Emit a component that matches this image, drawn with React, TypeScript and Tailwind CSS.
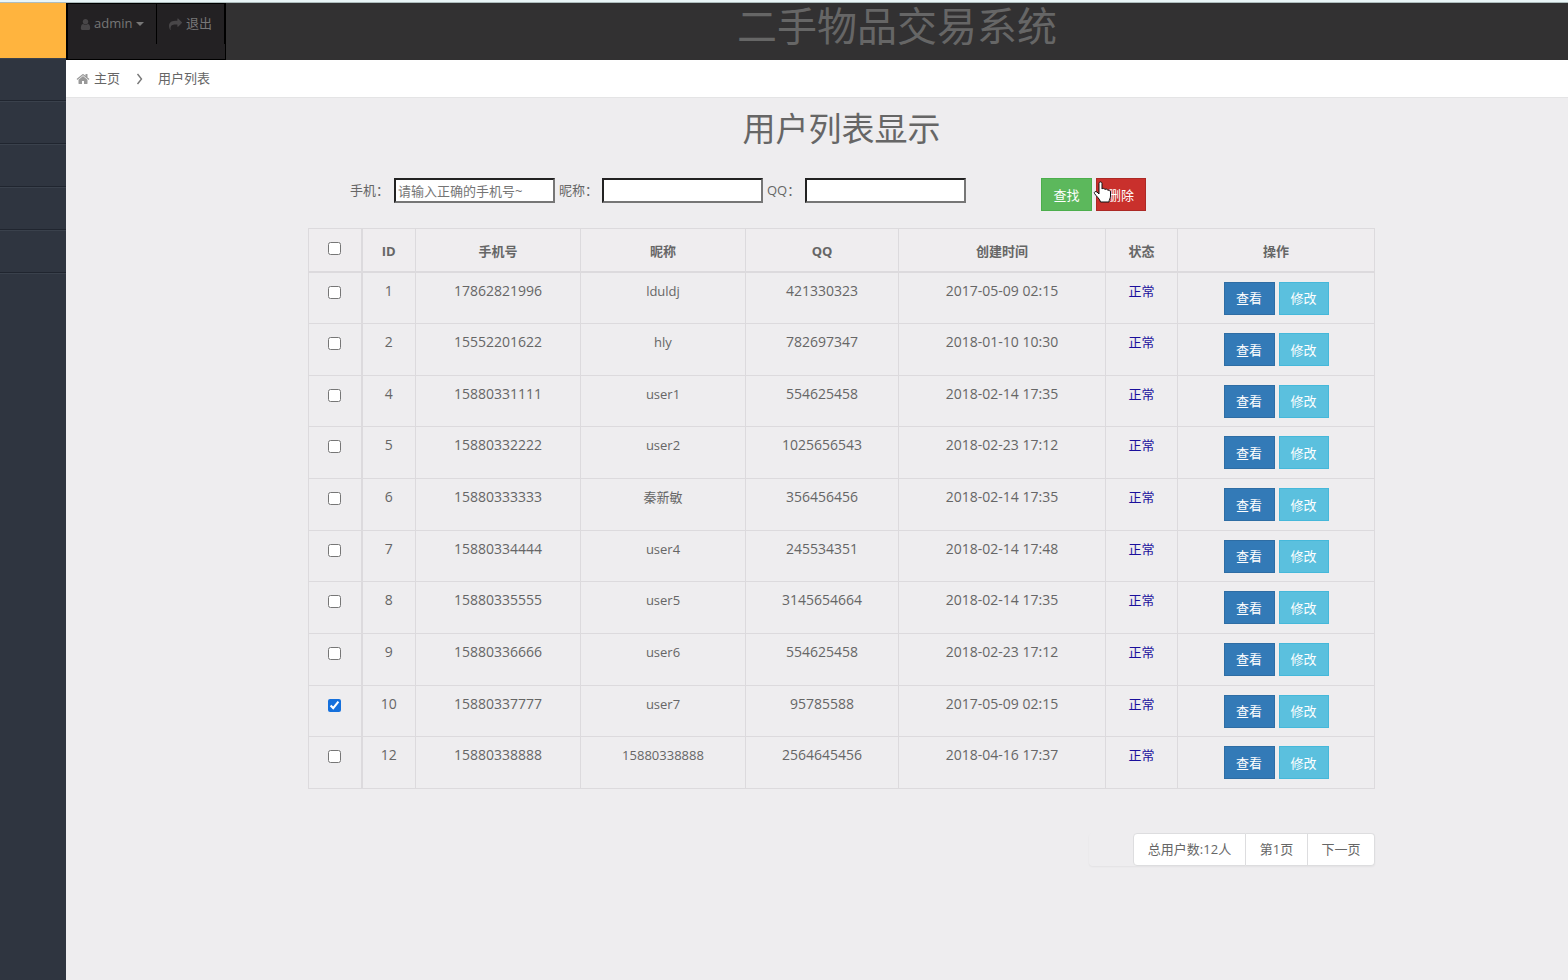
type User = {
  id: number;
  phone: string;
  nick: string;
  qq: string;
  created: string;
  checked?: boolean;
};

const users: User[] = [
  { id: 1, phone: "17862821996", nick: "lduldj", qq: "421330323", created: "2017-05-09 02:15" },
  { id: 2, phone: "15552201622", nick: "hly", qq: "782697347", created: "2018-01-10 10:30" },
  { id: 4, phone: "15880331111", nick: "user1", qq: "554625458", created: "2018-02-14 17:35" },
  { id: 5, phone: "15880332222", nick: "user2", qq: "1025656543", created: "2018-02-23 17:12" },
  { id: 6, phone: "15880333333", nick: "秦新敏", qq: "356456456", created: "2018-02-14 17:35" },
  { id: 7, phone: "15880334444", nick: "user4", qq: "245534351", created: "2018-02-14 17:48" },
  { id: 8, phone: "15880335555", nick: "user5", qq: "3145654664", created: "2018-02-14 17:35" },
  { id: 9, phone: "15880336666", nick: "user6", qq: "554625458", created: "2018-02-23 17:12" },
  { id: 10, phone: "15880337777", nick: "user7", qq: "95785588", created: "2017-05-09 02:15", checked: true },
  { id: 12, phone: "15880338888", nick: "15880338888", qq: "2564645456", created: "2018-04-16 17:37" },
];

const columns = ["ID", "手机号", "昵称", "QQ", "创建时间", "状态", "操作"];
const menu = ["用户", "物品", "订单", "公告", "设置"];

const fieldClass =
  "h-[25px] w-[161px] border-2 border-t-[#222] border-l-[#222] border-r-[#767676] border-b-[#767676] bg-white px-0.5 text-[13px] outline-none placeholder:text-[#757575]";
const buttonClass = "h-[33px] shrink-0 border text-center text-[13px] leading-5 whitespace-nowrap text-white";

const icons = {
  user: "M1536 1399q0 109-62.5 187t-150.5 78h-854q-88 0-150.5-78t-62.5-187q0-85 8.5-160.5t31.5-152 58.5-131 94-89 134.5-34.5q131 128 313 128t313-128q76 0 134.5 34.5t94 89 58.5 131 31.5 152 8.5 160.5zm-256-887q0 159-112.5 271.5t-271.5 112.5-271.5-112.5-112.5-271.5 112.5-271.5 271.5-112.5 271.5 112.5 112.5 271.5z",
  share:
    "M1792 640q0 26-19 45l-512 512q-19 19-45 19t-45-19-19-45v-256h-224q-98 0-175.5 6t-154 21.5-133 42.5-105.5 69.5-80 101-48.5 138.5-17.5 181q0 55 5 123 0 6 2.5 23.5t2.5 26.5q0 15-8.5 25t-23.5 10q-16 0-28-17-7-9-13-22t-13.5-30-10.5-24q-127-285-127-451 0-199 53-333 162-403 875-403h224v-256q0-26 19-45t45-19 45 19l512 512q19 19 19 45z",
  home: "M1472 992v480q0 26-19 45t-45 19h-384v-384h-256v384h-384q-26 0-45-19t-19-45v-480q0-1 .5-3t.5-3l575-474 575 474q1 2 1 6zm223-69l-62 74q-8 9-21 11h-3q-13 0-21-7l-692-577-692 577q-12 8-24 7-13-2-21-11l-62-74q-8-10-7-23.5t11-21.5l719-599q32-26 76-26t76 26l244 204v-195q0-14 9-23t23-9h192q14 0 23 9t9 23v408l219 182q10 8 11 21.5t-7 23.5z",
};

function Icon({ name, className }: { name: keyof typeof icons; className: string }) {
  return (
    <svg viewBox="0 0 1792 1792" fill="currentColor" className={className} aria-hidden="true">
      <path d={icons[name]} />
    </svg>
  );
}

function Sidebar() {
  return (
    <aside className="w-[66px] shrink-0 bg-[#2f3540]">
      <div className="h-[55px] bg-[#ffb43e]" />
      <nav>
        {menu.map((name) => (
          <a
            key={name}
            href="#"
            aria-label={name}
            className="block h-[43px] border-t border-b border-t-[#3a414c] border-b-[#20252f]"
          />
        ))}
      </nav>
      <div className="border-t border-[#3a414c]" />
    </aside>
  );
}

function Header() {
  return (
    <header className="flex h-[57px] bg-[#323132]">
      <ul className="flex w-[160px] border border-l-2 border-black bg-[#232123] text-[13px] text-[#777]">
        <li className="h-10 w-[89px] border-r border-black">
          <button type="button" className="flex h-10 w-full items-center pl-[11px] text-[#777]">
            <Icon name="user" className="mr-0.5 h-[13px] w-[13px] text-[#484648]" />
            admin
            <svg viewBox="0 0 8 4" fill="currentColor" className="ml-1 h-1 w-2" aria-hidden="true">
              <path d="M0 0h8L4 4z" />
            </svg>
          </button>
        </li>
        <li className="h-10 flex-1 border-r border-black">
          <a href="#" className="flex h-10 items-center pl-3">
            <Icon name="share" className="mr-1 h-[13px] w-[13px] text-[#484648]" />
            退出
          </a>
        </li>
      </ul>
      <h1 className="flex-1 text-center text-[40px] leading-[46px] font-normal text-[#666]">
        二手物品交易系统
      </h1>
    </header>
  );
}

function Breadcrumb() {
  return (
    <nav className="flex h-[38px] items-center border-b border-[#e4e4e5] bg-white pl-[10px] text-[13px]">
      <Icon name="home" className="mr-1 h-[14px] w-[14px] text-[#999]" />
      <a href="#">主页</a>
      <svg className="mr-3.5 ml-4 h-3 w-2" viewBox="0 0 8 12" fill="none" stroke="#777" strokeWidth="1.4" aria-hidden="true">
        <path d="M1.5 1 L5.5 6 L1.5 11" />
      </svg>
      <span>用户列表</span>
    </nav>
  );
}

function Search() {
  return (
    <form className="mt-[25px] flex items-start pl-[42px]" onSubmit={(e) => e.preventDefault()}>
      <label htmlFor="phone" className="w-11 leading-6">手机：</label>
      <input id="phone" className={fieldClass} placeholder="请输入正确的手机号~" />
      <label htmlFor="nick" className="ml-1 w-[43px] leading-6">昵称：</label>
      <input id="nick" className={fieldClass} />
      <label htmlFor="qq" className="ml-1 w-[38px] leading-6">QQ：</label>
      <input id="qq" className={fieldClass} />
      <div className="ml-[75px] flex gap-1">
        <button type="submit" className={`${buttonClass} w-[51px] border-[#4cae4c] bg-[#5cb85c]`}>
          查找
        </button>
        <div className="relative flex">
          <button type="button" className={`${buttonClass} w-[50px] border-[#ac2925] bg-[#c9302c]`}>
            删除
          </button>
          <svg
            className="pointer-events-none absolute top-[3px] -left-[3px] h-6 w-[19px]"
            viewBox="0 0 19 24"
            fill="#fff"
            stroke="#111"
            strokeWidth="1"
            strokeLinejoin="round"
            aria-hidden="true"
          >
            <path d="M6 2.5C6 .4 9 .4 9 2.5V8c.6-1 2.700-.8 3 .6 .8-.9 2.600-.5 2.900.8 1-.6 2.600 0 2.600 1.600V15c0 2.600-1.500 3.600-1.500 6H7.500C7 18 3.500 15.500 1.500 12.500.7 11 2.600 9.800 4 11l2 2z" />
          </svg>
        </div>
      </div>
    </form>
  );
}

function UserTable() {
  return (
    <table className="mt-[17px] h-[561px] w-full table-fixed border-collapse border border-[#dcdadd] text-center">
      <colgroup>
        <col className="w-[53px]" />
        <col className="w-[54px]" />
        <col className="w-[165px]" />
        <col className="w-[165px]" />
        <col className="w-[153px]" />
        <col className="w-[207px]" />
        <col className="w-[72px]" />
        <col />
      </colgroup>
      <thead className="bg-[#efedef]">
        <tr className="h-[43px] border-b-2 border-[#dcdadd]">
          <th className="border-r-2 border-[#dcdadd] pt-[13px] align-top">
            <input type="checkbox" aria-label="全选" className="mx-auto block h-[13px] w-[13px]" />
          </th>
          {columns.map((name) => (
            <th key={name} className="border-r border-[#dcdadd] pt-3 align-top leading-5 font-bold">
              {name}
            </th>
          ))}
        </tr>
      </thead>
      <tbody>
        {users.map((user) => (
          <tr key={user.id} className="border-b border-[#dcdadd] align-top leading-5 *:border-r *:border-[#dcdadd] *:pt-2">
            <td className="border-r-2!">
              <input
                type="checkbox"
                aria-label={user.phone}
                defaultChecked={user.checked}
                className="mx-auto mt-[5px] block h-[13px] w-[13px] accent-[#1570dc]"
              />
            </td>
            <td className="text-[14px]">{user.id}</td>
            <td className="text-[14px]">{user.phone}</td>
            <td>{user.nick}</td>
            <td className="text-[14px]">{user.qq}</td>
            <td className="text-[14px]">{user.created}</td>
            <td className="text-[#1a0f9c]">正常</td>
            <td className="pt-[9px]!">
              <div className="flex justify-center gap-1">
                <button type="button" className={`${buttonClass} w-[51px] border-[#2e6da4] bg-[#337ab7]`}>
                  查看
                </button>
                <button type="button" className={`${buttonClass} w-[50px] border-[#46b8da] bg-[#5bc0de]`}>
                  修改
                </button>
              </div>
            </td>
          </tr>
        ))}
      </tbody>
    </table>
  );
}

function Pagination() {
  return (
    <nav className="mt-11 flex justify-end">
      <ul className="flex h-[33px] rounded shadow-[0_1px_2px_rgba(0,0,0,0.05)]">
        <li className="w-11" />
        <li className="w-[113px] rounded-l border border-[#dddddf] bg-white text-center leading-[31px]">
          <span>总用户数:12人</span>
        </li>
        <li className="w-[62px] border-y border-r border-[#dddddf] bg-white text-center leading-[31px]">
          <span>第1页</span>
        </li>
        <li className="w-[67px] rounded-r border-y border-r border-[#dddddf] bg-white text-center leading-[31px]">
          <a href="#">下一页</a>
        </li>
      </ul>
    </nav>
  );
}

export default function App() {
  return (
    <div className="flex min-h-screen flex-col bg-[#eeedef] font-['Open_Sans','Noto_Sans_CJK_SC',sans-serif] text-[13px] text-[#666]">
      <div className="h-[3px] border-b border-[#aebdbd] bg-[#eaf6f8]" />
      <div className="flex flex-1">
        <Sidebar />
        <div className="min-w-0 flex-1">
          <Header />
          <Breadcrumb />
          <main className="pr-[193px] pl-[242px]">
            <h2 className="pt-[7px] text-center text-[33px] leading-12 font-normal">用户列表显示</h2>
            <Search />
            <UserTable />
            <Pagination />
          </main>
        </div>
      </div>
    </div>
  );
}
